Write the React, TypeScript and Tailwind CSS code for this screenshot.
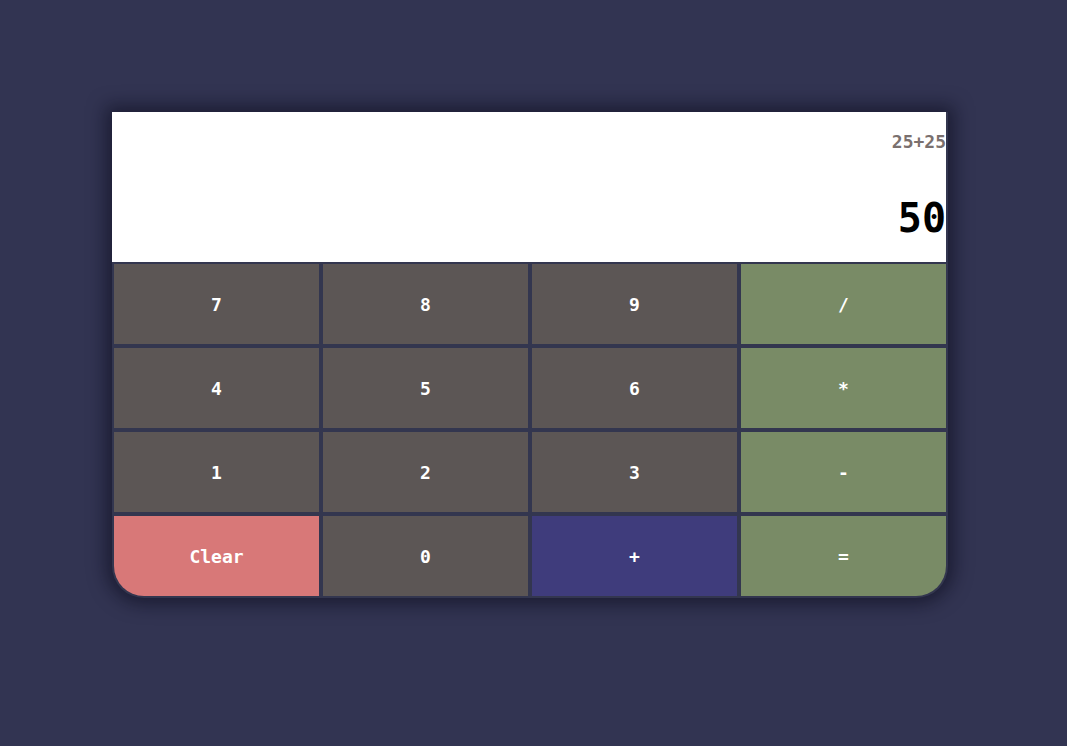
import React from 'react'

const keys: { label: string; kind: 'num' | 'op' | 'clear' | 'plus' }[] = [
    { label: '7', kind: 'num' }, { label: '8', kind: 'num' }, { label: '9', kind: 'num' }, { label: '/', kind: 'op' },
    { label: '4', kind: 'num' }, { label: '5', kind: 'num' }, { label: '6', kind: 'num' }, { label: '*', kind: 'op' },
    { label: '1', kind: 'num' }, { label: '2', kind: 'num' }, { label: '3', kind: 'num' }, { label: '-', kind: 'op' },
    { label: 'Clear', kind: 'clear' }, { label: '0', kind: 'num' }, { label: '+', kind: 'plus' }, { label: '=', kind: 'op' },
]

const kindClass = {
    num: 'bg-[#5c5655]',
    op: 'bg-[#798b66]',
    clear: 'bg-[#d87878] rounded-bl-[30px]',
    plus: 'bg-[#3f3c7c]',
}

const App = () => {
    const [prev] = React.useState('25+25')
    const [result] = React.useState('50')

    return (
        <div className="min-h-[746px] w-full bg-[#323452] pt-[112px] pl-[112px] font-['DejaVu_Sans_Mono',monospace]">
            <div className="w-[836px] rounded-b-[32px] bg-[#33364f] shadow-[0_0_18px_6px_rgba(10,10,25,0.55)] overflow-hidden">
                {/* display */}
                <div className="h-[150px] mr-[2px] bg-white flex flex-col items-end">
                    <p className="mt-[19px] text-[18px] leading-[22px] font-bold text-[#7a706e]">{prev}</p>
                    <p className="mt-[41px] text-[40px] leading-[48px] font-bold text-black">{result}</p>
                </div>

                {/* keys */}
                <div className="grid grid-cols-4 gap-[4px] p-[2px]">
                    {keys.map(k => (
                        <button
                            key={k.label}
                            className={(k.label === '=' ? 'rounded-br-[30px] ' : '') + kindClass[k.kind] + ' h-[80px] text-white text-[18px] font-bold flex items-center justify-center'}>
                            {k.label}
                        </button>
                    ))}
                </div>
            </div>
        </div>
    )
}

export default App
